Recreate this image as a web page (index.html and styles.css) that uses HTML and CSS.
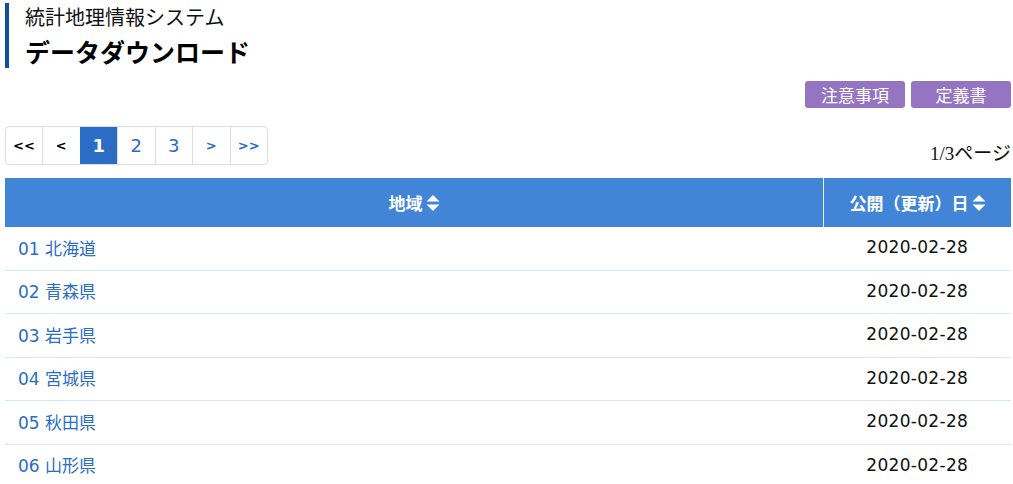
FILE: index.html
```html
<!DOCTYPE html>
<html lang="ja">
<head>
    <meta charset="UTF-8">
    <meta name="viewport" content="width=device-width, initial-scale=1.0">
    <title>データダウンロード</title>
    <link rel="stylesheet" href="styles.css">
</head>
<body>
    <div class="page-head">
        <p class="site-name">統計地理情報システム</p>
        <h1 class="page-title">データダウンロード</h1>
    </div>

    <div class="doc-links">
        <a class="doc-btn" href="#">注意事項</a>
        <a class="doc-btn" href="#">定義書</a>
    </div>

    <div class="pager-row">
        <ul class="pager">
            <li class="plain">&lt;&lt;</li>
            <li class="plain">&lt;</li>
            <li class="active">1</li>
            <li>2</li>
            <li>3</li>
            <li class="arrow">&gt;</li>
            <li class="arrow">&gt;&gt;</li>
        </ul>
        <div class="page-count">1/3ページ</div>
    </div>

    <table class="data-table">
        <thead>
            <tr>
                <th class="col-area">地域<span class="sort"><svg width="14" height="18" viewBox="0 0 14 18"><path d="M0.5 7.5 L7 1 L13.5 7.5 Z" fill="#fff"/><path d="M0.5 10.5 L7 17 L13.5 10.5 Z" fill="#fff"/></svg></span></th>
                <th class="col-date">公開（更新）日<span class="sort"><svg width="14" height="18" viewBox="0 0 14 18"><path d="M0.5 7.5 L7 1 L13.5 7.5 Z" fill="#fff"/><path d="M0.5 10.5 L7 17 L13.5 10.5 Z" fill="#fff"/></svg></span></th>
            </tr>
        </thead>
        <tbody>
            <tr><td><a href="#">01 北海道</a></td><td class="date">2020-02-28</td></tr>
            <tr><td><a href="#">02 青森県</a></td><td class="date">2020-02-28</td></tr>
            <tr><td><a href="#">03 岩手県</a></td><td class="date">2020-02-28</td></tr>
            <tr><td><a href="#">04 宮城県</a></td><td class="date">2020-02-28</td></tr>
            <tr><td><a href="#">05 秋田県</a></td><td class="date">2020-02-28</td></tr>
            <tr><td><a href="#">06 山形県</a></td><td class="date">2020-02-28</td></tr>
        </tbody>
    </table>
</body>
</html>
```

FILE: styles.css
```css
body {
    margin: 0;
    padding: 3px 2px 0 5px;
    font-family: "DejaVu Sans", "Noto Sans CJK JP", sans-serif;
    font-size: 17px;
    color: #111;
    background-color: white;
}
.page-head {
    border-left: 4px solid #0d4ea6;
    padding-left: 16px;
    height: 65px;
}
.site-name {
    margin: 0;
    padding-top: 1px;
    font-family: "Noto Sans CJK JP", sans-serif;
    font-size: 20px;
    line-height: 26px;
    color: #111;
}
.page-title {
    margin: 0;
    padding-top: 6px;
    font-family: "Noto Sans CJK JP", sans-serif;
    font-size: 25px;
    line-height: 30px;
    font-weight: bold;
    color: #000;
}
.doc-links {
    display: flex;
    justify-content: flex-end;
    gap: 6px;
    margin-top: 13px;
}
.doc-btn {
    display: block;
    width: 100px;
    height: 27px;
    line-height: 27px;
    text-align: center;
    background-color: #9575c1;
    color: white;
    border-radius: 3px;
    text-decoration: none;
    font-family: "Noto Sans CJK JP", sans-serif;
    font-size: 17px;
}
.pager-row {
    display: flex;
    justify-content: space-between;
    align-items: flex-end;
    margin-top: 18px;
}
.pager {
    display: flex;
    list-style: none;
    margin: 0;
    padding: 0;
    border: 1px solid #ddd;
    border-radius: 4px;
    overflow: hidden;
}
.pager li {
    width: 36.5px;
    height: 37px;
    line-height: 37px;
    text-align: center;
    border-left: 1px solid #ddd;
    color: #2b6cc4;
    font-size: 18px;
}
.pager li:first-child {
    border-left: none;
    width: 36px;
}
.pager li.plain {
    color: #000;
    font-size: 13px;
    font-weight: bold;
}
.pager li.arrow {
    font-size: 13px;
    font-weight: bold;
}
.pager li.active {
    background-color: #2b6cc4;
    border-left-color: #2b6cc4;
    color: white;
    font-weight: bold;
}
.page-count {
    font-family: "Liberation Serif", "Noto Sans CJK JP", serif;
    font-size: 19px;
    line-height: 20px;
    margin-bottom: 1px;
}
.data-table {
    width: 100%;
    border-collapse: collapse;
    margin-top: 13px;
}
.data-table th {
    background-color: #4285d6;
    color: white;
    font-family: "Noto Sans CJK JP", sans-serif;
    font-size: 17px;
    font-weight: bold;
    height: 49px;
    padding: 0;
    text-align: center;
}
.data-table th.col-date {
    width: 187px;
    border-left: 1px solid #e8f0fb;
}
.sort {
    display: inline-block;
    vertical-align: middle;
    margin-left: 3px;
    position: relative;
    top: -2px;
}
.sort svg {
    display: block;
}
.data-table td {
    height: 40.5px;
    padding: 0 13px 2px;
    border-bottom: 1px solid #d7e5f6;
}
.data-table td a {
    color: #2b6cc4;
    text-decoration: none;
}
.data-table td.date {
    text-align: center;
    padding: 0 0 2px;
    letter-spacing: 0.3px;
}
```
